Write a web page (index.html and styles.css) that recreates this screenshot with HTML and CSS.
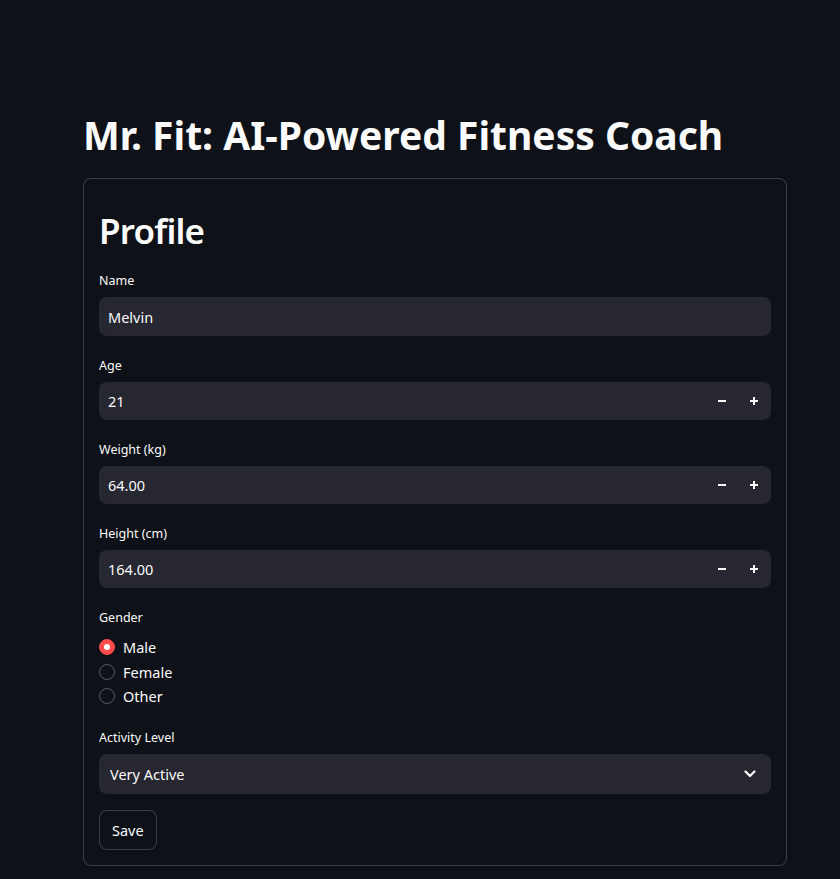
FILE: index.html
```html
<!DOCTYPE html>
<html lang="en">
<head>
<meta charset="utf-8">
<title>Mr. Fit</title>
<link rel="stylesheet" href="styles.css">
</head>
<body>
<main class="main">
  <h1 class="title">Mr. Fit: AI-Powered Fitness Coach</h1>
  <section class="card">
    <h2 class="heading">Profile</h2>

    <div class="field">
      <label class="label">Name</label>
      <div class="input text-input"><span class="value">Melvin</span></div>
    </div>

    <div class="field">
      <label class="label">Age</label>
      <div class="input number-input">
        <span class="value">21</span>
        <span class="step"><svg width="10" height="10" viewBox="0 0 10 10"><rect x="1" y="4" width="8" height="2" fill="#fafafa"/></svg></span>
        <span class="step"><svg width="10" height="10" viewBox="0 0 10 10"><rect x="1" y="4" width="8" height="2" fill="#fafafa"/><rect x="4" y="1" width="2" height="8" fill="#fafafa"/></svg></span>
      </div>
    </div>

    <div class="field">
      <label class="label">Weight (kg)</label>
      <div class="input number-input">
        <span class="value">64.00</span>
        <span class="step"><svg width="10" height="10" viewBox="0 0 10 10"><rect x="1" y="4" width="8" height="2" fill="#fafafa"/></svg></span>
        <span class="step"><svg width="10" height="10" viewBox="0 0 10 10"><rect x="1" y="4" width="8" height="2" fill="#fafafa"/><rect x="4" y="1" width="2" height="8" fill="#fafafa"/></svg></span>
      </div>
    </div>

    <div class="field">
      <label class="label">Height (cm)</label>
      <div class="input number-input">
        <span class="value">164.00</span>
        <span class="step"><svg width="10" height="10" viewBox="0 0 10 10"><rect x="1" y="4" width="8" height="2" fill="#fafafa"/></svg></span>
        <span class="step"><svg width="10" height="10" viewBox="0 0 10 10"><rect x="1" y="4" width="8" height="2" fill="#fafafa"/><rect x="4" y="1" width="2" height="8" fill="#fafafa"/></svg></span>
      </div>
    </div>

    <div class="field">
      <label class="label">Gender</label>
      <div class="radios">
        <div class="radio"><span class="dot checked"></span><span>Male</span></div>
        <div class="radio"><span class="dot"></span><span>Female</span></div>
        <div class="radio"><span class="dot"></span><span>Other</span></div>
      </div>
    </div>

    <div class="field">
      <label class="label">Activity Level</label>
      <div class="input select-input">
        <span class="value">Very Active</span>
        <svg class="chevron" width="12" height="8" viewBox="0 0 12 8"><path d="M1.5 1.5 L6 6 L10.5 1.5" fill="none" stroke="#fafafa" stroke-width="2.2" stroke-linecap="round" stroke-linejoin="round"/></svg>
      </div>
    </div>

    <div class="actions">
      <button class="button" type="button">Save</button>
    </div>
  </section>
</main>
</body>
</html>
```
FILE: styles.css
```css
html, body {
  margin: 0;
  padding: 0;
  background: #0e1117;
  color: #fafafa;
  font-family: "Noto Sans", "Open Sans", sans-serif;
}

.main {
  width: 704px;
  margin-left: 83px;
  padding-top: 111px;
}

.title {
  margin: 0 0 20px 0;
  font-size: 39px;
  font-weight: 700;
  line-height: 47px;
  white-space: nowrap;
}

.card {
  border: 1px solid rgba(250, 250, 250, 0.2);
  border-radius: 8px;
  padding: 15px;
  display: flex;
  flex-direction: column;
  gap: 16px;
}

.heading {
  margin: 0;
  padding-top: 16px;
  font-size: 35px;
  font-weight: 600;
  line-height: 41px;
  letter-spacing: -0.8px;
}

.field {
  display: flex;
  flex-direction: column;
}

.label {
  box-sizing: border-box;
  height: 26px;
  padding-top: 3px;
  margin-bottom: 4px;
  display: flex;
  align-items: center;
  font-size: 12.5px;
  line-height: 1;
  color: #fafafa;
}

.input {
  background: #262730;
  border-radius: 8px;
  display: flex;
  align-items: center;
  font-size: 14.5px;
}

.text-input {
  height: 39px;
  padding-left: 9px;
}

.number-input {
  height: 38px;
  padding-left: 9px;
  padding-right: 1px;
}

.number-input .value {
  flex: 1;
}

.step {
  width: 32px;
  height: 38px;
  display: flex;
  align-items: center;
  justify-content: center;
}

.select-input {
  height: 40px;
  padding: 0 15px 0 11px;
  justify-content: space-between;
}

.chevron {
  display: block;
}

.radios {
  height: 74px;
  display: flex;
  flex-direction: column;
}

.radio {
  flex: 1;
  display: flex;
  align-items: center;
  gap: 8px;
  font-size: 14.5px;
  padding-top: 1px;
}

.dot {
  width: 16px;
  height: 16px;
  box-sizing: border-box;
  border-radius: 50%;
  border: 1px solid rgba(250, 250, 250, 0.3);
  flex: none;
  display: flex;
  align-items: center;
  justify-content: center;
}

.dot.checked {
  background: #ff4b4b;
  border-color: #ff4b4b;
}

.dot.checked::after {
  content: "";
  width: 6px;
  height: 6px;
  border-radius: 50%;
  background: #ffffff;
}

.actions {
  display: flex;
}

.button {
  height: 40px;
  padding: 0 12px;
  background: transparent;
  color: #fafafa;
  border: 1px solid rgba(250, 250, 250, 0.2);
  border-radius: 8px;
  font-family: "Noto Sans", "Open Sans", sans-serif;
  font-size: 14.5px;
}
```
